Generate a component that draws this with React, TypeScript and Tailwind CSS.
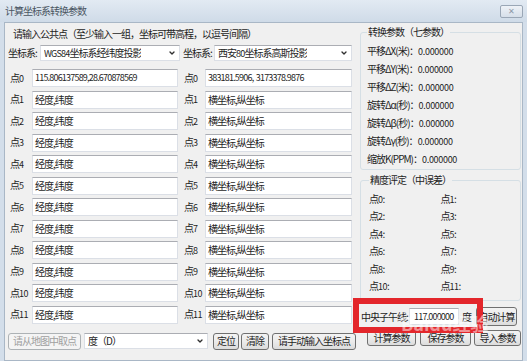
import { ChevronDown } from 'lucide-react'

const points = Array.from({ length: 12 }, (_, i) => i)

const params = ['平移ΔX(米)：', '平移ΔY(米)：', '平移ΔZ(米)：', '旋转Δα(秒)：', '旋转Δβ(秒)：', '旋转Δγ(秒)：', '缩放K(PPM)：']

const btn = 'flex h-full items-center justify-center whitespace-nowrap rounded-[3px] border border-[#707070] bg-gradient-to-b from-[#f3f3f3] via-[#ebebeb] to-[#dcdcdc] text-[#1e1e1e]'
const input = 'flex h-[18px] items-center whitespace-nowrap border border-[#dbdfe6] border-t-[#abadb3] bg-white pl-[2px] text-[#1e1e1e]'
const num = 'text-[9px] tracking-[-0.8px]'

function PointLabel({ n }: { n: number }) {
  return (
    <span className="flex items-baseline whitespace-nowrap text-[#1e1e1e]">
      点<span className="text-[9px] tracking-[-0.5px]">{n}</span>
    </span>
  )
}

function Combo({ text, w }: { text: React.ReactNode; w: string }) {
  return (
    <div className={`${w} flex h-[16px] items-center justify-between border border-[#dbdfe6] border-t-[#abadb3] bg-white pl-[3px] pr-[3px]`}>
      <span className="truncate">{text}</span>
      <ChevronDown size={8} strokeWidth={4} className="shrink-0 text-[#303030]" />
    </div>
  )
}

export default function App() {
  return (
    <div className="flex h-[361px] w-[527px] flex-col overflow-hidden bg-[#d3deea] font-['Noto_Sans_CJK_SC',sans-serif] text-[10px] leading-[14px] tracking-[-1px] text-[#1e1e1e]">
      <div className="flex h-[22px] shrink-0 items-center justify-between bg-gradient-to-b from-[#e2eaf3] to-[#cfdbe8] pl-[5px] pr-[4px]">
        <span className="text-[#4a5562]">计算坐标系转换参数</span>
        <div className="flex h-[13px] w-[23px] items-center justify-center rounded-[2px] border border-[#9aa7b6] bg-gradient-to-b from-[#eef2f7] to-[#d6dfe9] text-[8px] leading-none tracking-normal text-[#8d99a8]">✕</div>
      </div>
      <div className="mx-[4px] flex flex-1 border border-[#a9b7c6] bg-[#f0f0f0]">
        <div className="flex w-[352px] flex-col pl-[3px] pt-[4px]">
          <div className="pl-[5px]">请输入公共点（至少输入一组，坐标可带高程，以逗号间隔）</div>
          <div className="mt-[4px] flex items-center">
            <span className="w-[32px] whitespace-nowrap">坐标系:</span>
            <Combo w="w-[140px]" text={<><span className={num}>WGS84</span>坐标系经纬度投影</>} />
            <span className="ml-[3px] w-[31px] whitespace-nowrap">坐标系:</span>
            <Combo w="w-[138px]" text={<>西安<span className={num}>80</span>坐标系高斯投影</>} />
          </div>
          <div className="mt-[8px] flex flex-col gap-[3.5px]">
            {points.map((i) => (
              <div key={i} className="flex items-center">
                <div className="w-[24px] pl-[2px]"><PointLabel n={i} /></div>
                <div className={`${input} w-[146px]`}>{i === 0 ? <span className={num}>115.806137589,28.670878569</span> : '经度,纬度'}</div>
                <div className="ml-[6px] w-[21px]"><PointLabel n={i} /></div>
                <div className={`${input} w-[147px]`}>{i === 0 ? <span className={`${num} whitespace-pre`}>383181.5906,  3173378.9876</span> : '横坐标,纵坐标'}</div>
              </div>
            ))}
          </div>
          <div className="mt-[9px] flex h-[17px] items-center">
            <div className="flex h-full w-[73px] items-center justify-center whitespace-nowrap rounded-[3px] border border-[#adb2b5] bg-[#f4f4f4] text-[#a0a0a0]">请从地图中取点</div>
            <Combo w="ml-[3px] w-[124px]" text="度（D）" />
            <div className="ml-[5px] h-full w-[26px]"><div className={btn}>定位</div></div>
            <div className="ml-[2px] h-full w-[28px]"><div className={btn}>清除</div></div>
            <div className="ml-[3px] h-full w-[84px]"><div className={btn}>请手动输入坐标点</div></div>
          </div>
        </div>
        <div className="relative flex flex-1 flex-col pl-[4px] pr-[3px]">
          <fieldset className="mt-[2px] h-[145px] rounded-[3px] border border-[#d5dfe5] px-[6px]">
            <legend className="px-[1px]">转换参数（七参数）</legend>
            <div className="mt-[5px] flex flex-col gap-[4px]">
              {params.map((p) => (
                <div key={p} className="flex h-[14px] items-baseline whitespace-nowrap">
                  {p}<span className="text-[9px] tracking-[-0.3px]">0.000000</span>
                </div>
              ))}
            </div>
          </fieldset>
          <fieldset className="mt-[3px] h-[128px] rounded-[3px] border border-[#d5dfe5] px-[8px]">
            <legend className="px-[1px]">精度评定（中误差）</legend>
            <div className="mt-[5px] grid grid-cols-2 gap-y-[3.4px]">
              {points.map((i) => (
                <div key={i} className="flex h-[14px] items-baseline">
                  点<span className="text-[9px] tracking-[-0.5px]">{i}</span>:
                </div>
              ))}
            </div>
          </fieldset>
          <div className="mt-[6px] flex h-[19px] items-center">
            <span className="ml-[1px] w-[48px] whitespace-nowrap">中央子午线:</span>
            <div className="flex h-[17px] w-[50px] items-center overflow-hidden border border-[#dbdfe6] border-t-[#abadb3] bg-white pl-[4px]"><span className={num}>117.000000</span></div>
            <span className="ml-[3px]">度</span>
            <div className="ml-[5px] h-full w-[41px]"><div className={btn}>自动计算</div></div>
          </div>
          <div className="mt-[4px] flex h-[16px] pl-[7px]">
            <div className="h-full w-[49px]"><div className={btn}>计算参数</div></div>
            <div className="ml-[4px] h-full w-[51px]"><div className={btn}>保存参数</div></div>
            <div className="ml-[3px] h-full w-[47px]"><div className={btn}>导入参数</div></div>
          </div>
          <div className="pointer-events-none absolute left-[-3px] top-[275px] h-[35px] w-[130px] border-[6px] border-[#e3262b]" />
          <div className="pointer-events-none absolute left-[45px] top-[293px] text-[18px] font-bold tracking-normal text-white/50">Baidu经验</div>
        </div>
      </div>
    </div>
  )
}
